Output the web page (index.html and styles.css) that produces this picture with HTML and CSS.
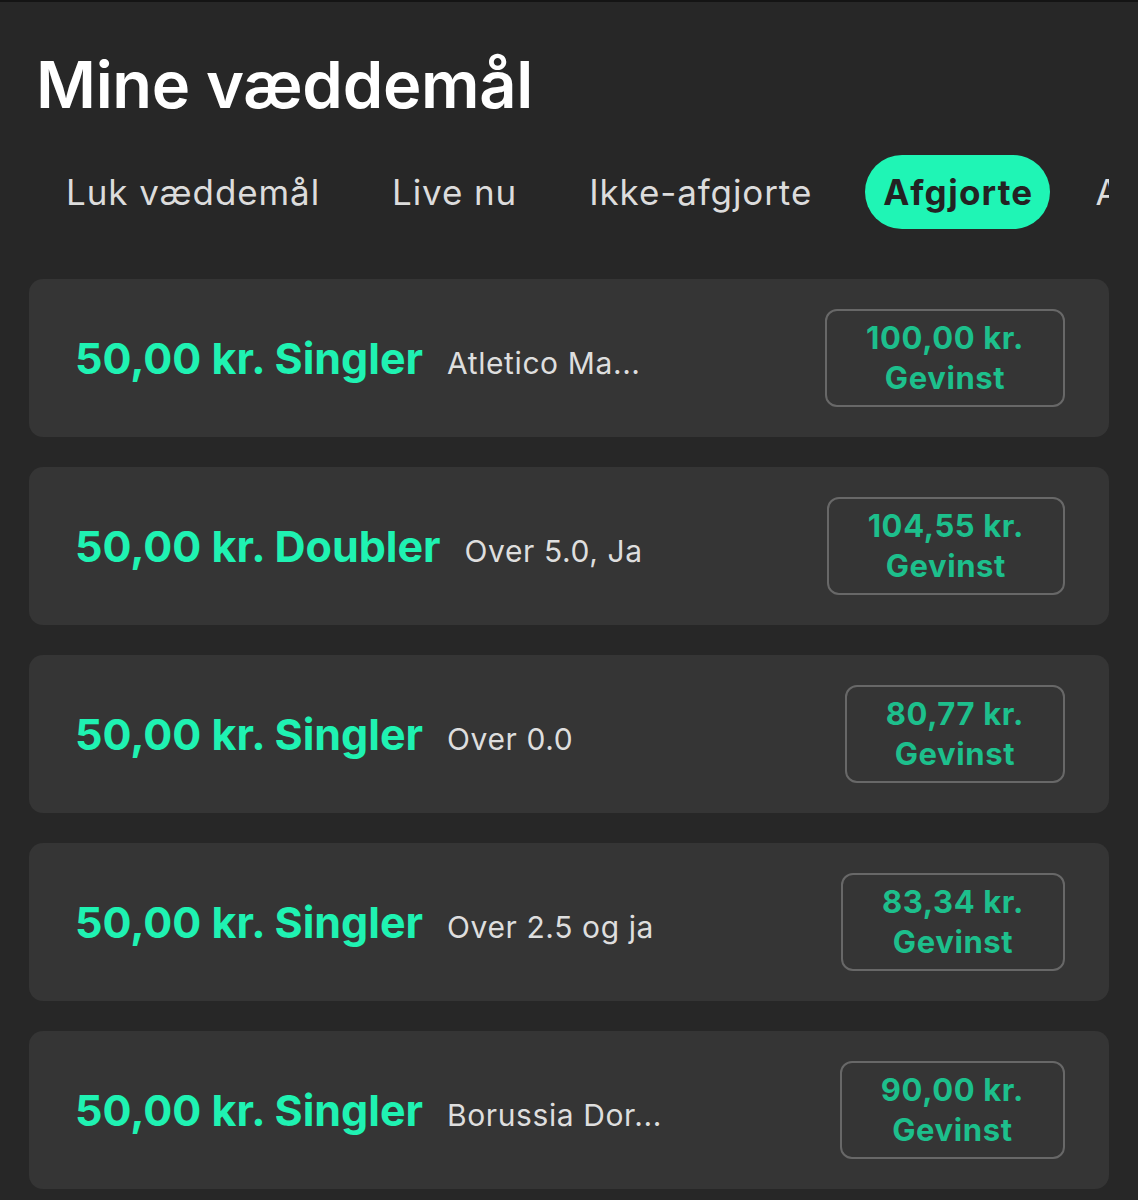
FILE: index.html
```html
<!DOCTYPE html>
<html lang="da">
<head>
    <meta charset="UTF-8">
    <meta name="viewport" content="width=device-width, initial-scale=1.0">
    <title>Mine væddemål</title>
    <link rel="stylesheet" href="styles.css">
</head>
<body>

    <header class="page-header">
        <h1>Mine væddemål</h1>
    </header>

    <!-- Tabs -->
    <nav class="tabs">
        <span class="tab">Luk væddemål</span>
        <span class="tab">Live nu</span>
        <span class="tab">Ikke-afgjorte</span>
        <span class="tab active">Afgjorte</span>
        <span class="tab tab-last">Alle</span>
    </nav>

    <!-- Bet list -->
    <section class="bets">
        <div class="bet">
            <div class="bet-info">
                <span class="bet-stake">50,00 kr. Singler</span>
                <span class="bet-desc">Atletico Ma...</span>
            </div>
            <div class="bet-win">
                <span>100,00 kr.</span>
                <span>Gevinst</span>
            </div>
        </div>

        <div class="bet">
            <div class="bet-info">
                <span class="bet-stake">50,00 kr. Doubler</span>
                <span class="bet-desc">Over 5.0, Ja</span>
            </div>
            <div class="bet-win">
                <span>104,55 kr.</span>
                <span>Gevinst</span>
            </div>
        </div>

        <div class="bet">
            <div class="bet-info">
                <span class="bet-stake">50,00 kr. Singler</span>
                <span class="bet-desc">Over 0.0</span>
            </div>
            <div class="bet-win">
                <span>80,77 kr.</span>
                <span>Gevinst</span>
            </div>
        </div>

        <div class="bet">
            <div class="bet-info">
                <span class="bet-stake">50,00 kr. Singler</span>
                <span class="bet-desc">Over 2.5 og ja</span>
            </div>
            <div class="bet-win">
                <span>83,34 kr.</span>
                <span>Gevinst</span>
            </div>
        </div>

        <div class="bet">
            <div class="bet-info">
                <span class="bet-stake">50,00 kr. Singler</span>
                <span class="bet-desc">Borussia Dor...</span>
            </div>
            <div class="bet-win">
                <span>90,00 kr.</span>
                <span>Gevinst</span>
            </div>
        </div>
    </section>

</body>
</html>
```

FILE: styles.css
```css
body {
    margin: 0;
    background-color: #272727;
    border-top: 2px solid #141414;
    font-family: Inter, "Noto Sans", sans-serif;
    color: #fff;
    overflow: hidden;
}

.page-header {
    padding: 42px 36px 0;
}

.page-header h1 {
    margin: 0;
    font-size: 65px;
    font-weight: 600;
    line-height: 82px;
    letter-spacing: -0.3px;
}

.tabs {
    display: flex;
    align-items: center;
    gap: 34px;
    margin: 29px 29px 0 0;
    padding-left: 47px;
    overflow: hidden;
    white-space: nowrap;
}

.tab {
    padding: 0 19px;
    font-size: 35px;
    line-height: 74px;
    letter-spacing: 0.9px;
    color: #dcdcdc;
}

.tab.active {
    padding: 0 17px 0 18px;
    background-color: #1ff5b5;
    color: #232323;
    font-weight: 700;
    letter-spacing: 1.2px;
    border-radius: 37px;
}

.tab-last {
    margin-left: -8px;
}

.bets {
    display: flex;
    flex-direction: column;
    gap: 30px;
    padding: 50px 29px 0;
}

.bet {
    display: flex;
    align-items: center;
    justify-content: space-between;
    height: 158px;
    padding: 0 44px 0 46px;
    background-color: #353535;
    border-radius: 14px;
    box-sizing: border-box;
}

.bet-info {
    display: flex;
    align-items: baseline;
    gap: 24px;
}

.bet-stake {
    font-size: 43px;
    font-weight: 700;
    color: #1ff2b2;
    letter-spacing: 0;
}

.bet-desc {
    font-size: 30px;
    letter-spacing: 0.6px;
    color: #dedede;
}

.bet-win {
    display: flex;
    flex-direction: column;
    align-items: center;
    padding: 7px 39px;
    border: 2px solid #686868;
    border-radius: 12px;
    font-size: 31px;
    font-weight: 700;
    line-height: 40px;
    letter-spacing: 0.6px;
    color: #1dbf8c;
}
```
